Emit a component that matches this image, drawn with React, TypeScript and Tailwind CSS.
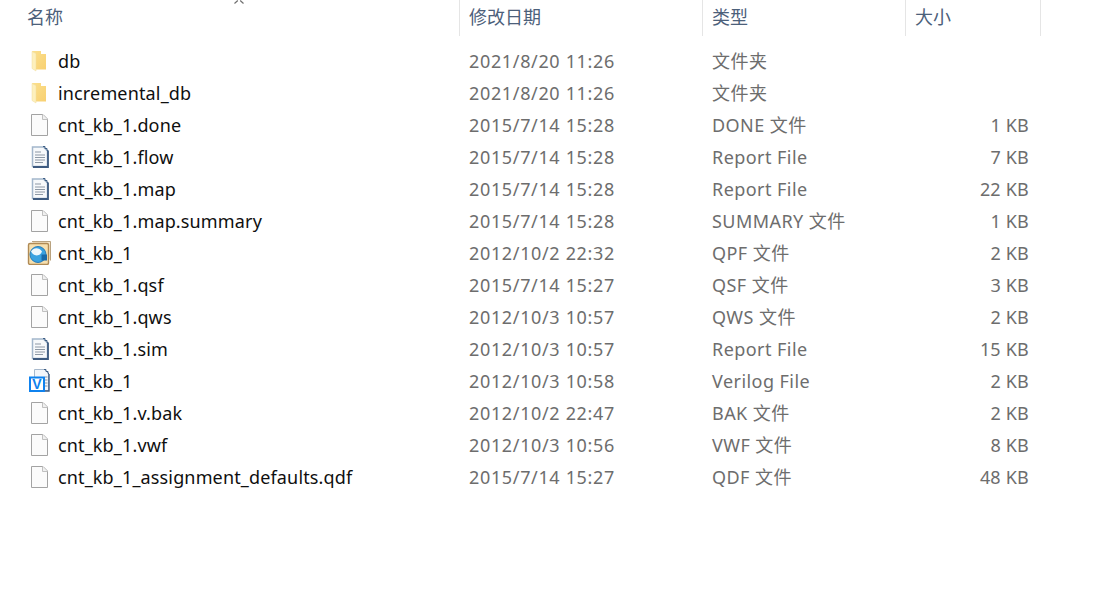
const files = [
  { name: "db", date: "2021/8/20 11:26", type: "文件夹", size: "", icon: "folder" },
  { name: "incremental_db", date: "2021/8/20 11:26", type: "文件夹", size: "", icon: "folder" },
  { name: "cnt_kb_1.done", date: "2015/7/14 15:28", type: "DONE 文件", size: "1 KB", icon: "blank" },
  { name: "cnt_kb_1.flow", date: "2015/7/14 15:28", type: "Report File", size: "7 KB", icon: "report" },
  { name: "cnt_kb_1.map", date: "2015/7/14 15:28", type: "Report File", size: "22 KB", icon: "report" },
  { name: "cnt_kb_1.map.summary", date: "2015/7/14 15:28", type: "SUMMARY 文件", size: "1 KB", icon: "blank" },
  { name: "cnt_kb_1", date: "2012/10/2 22:32", type: "QPF 文件", size: "2 KB", icon: "qpf" },
  { name: "cnt_kb_1.qsf", date: "2015/7/14 15:27", type: "QSF 文件", size: "3 KB", icon: "blank" },
  { name: "cnt_kb_1.qws", date: "2012/10/3 10:57", type: "QWS 文件", size: "2 KB", icon: "blank" },
  { name: "cnt_kb_1.sim", date: "2012/10/3 10:57", type: "Report File", size: "15 KB", icon: "report" },
  { name: "cnt_kb_1", date: "2012/10/3 10:58", type: "Verilog File", size: "2 KB", icon: "verilog" },
  { name: "cnt_kb_1.v.bak", date: "2012/10/2 22:47", type: "BAK 文件", size: "2 KB", icon: "blank" },
  { name: "cnt_kb_1.vwf", date: "2012/10/3 10:56", type: "VWF 文件", size: "8 KB", icon: "blank" },
  { name: "cnt_kb_1_assignment_defaults.qdf", date: "2015/7/14 15:27", type: "QDF 文件", size: "48 KB", icon: "blank" },
];

function FileIcon({ kind }: { kind: string }) {
  if (kind === "folder") {
    return (
      <svg width="24" height="24" viewBox="0 0 24 24">
        <defs>
          <linearGradient id="folderBody" x1="0" y1="0" x2="1" y2="1">
            <stop offset="0" stopColor="#fbe08e" />
            <stop offset="1" stopColor="#f8d071" />
          </linearGradient>
        </defs>
        <path d="M5 2h9v3h5v15.500H9z" fill="url(#folderBody)" />
        <path d="M5 2.500l4 2v17.500l-4-2.500z" fill="#fdf0bd" stroke="#f0dc9e" strokeWidth="0.5" />
      </svg>
    );
  }
  if (kind === "blank") {
    return (
      <svg width="24" height="24" viewBox="0 0 24 24">
        <path d="M4.500 1.500h11.500l4.500 4.500v16.500h-16z" fill="#fbfbfb" stroke="#a3a3a3" />
        <path d="M15.500 1.500v5h5" fill="#f0f0f0" stroke="#c0c0c0" />
      </svg>
    );
  }
  if (kind === "report") {
    return (
      <svg width="24" height="24" viewBox="0 0 24 24">
        <path d="M5.500 2h11l4 4v15.500h-15z" fill="#f7f9fb" stroke="#a3b6cb" strokeWidth="1.500" />
        <path d="M16 1.500h2v2h2v2h1.500" fill="none" stroke="#3f5f85" />
        <path d="M8 7h6M8 10h10M8 12.500h10M8 15h10M8 17.500h8" stroke="#8d98a5" strokeWidth="1.200" />
        <path d="M21 6v16H6" fill="none" stroke="#3d5a80" strokeWidth="1.800" />
      </svg>
    );
  }
  if (kind === "qpf") {
    return (
      <svg width="24" height="24" viewBox="0 0 24 24">
        <path d="M5 0.500h18.500v19" fill="#f6e6c8" stroke="#b9a27f" />
        <rect x="1.500" y="2.500" width="20" height="21" rx="1.500" fill="#f6dfae" stroke="#b08a55" strokeWidth="1.400" />
        <circle cx="11" cy="13.500" r="8" fill="#3aa2e0" stroke="#2a7cb8" />
        <path d="M4 10.500c3-4.500 8-4 11 0-2 5-8 5.500-11 0z" fill="#eef7fc" />
        <rect x="14.500" y="13.500" width="5.500" height="6" fill="#1a6aa8" />
      </svg>
    );
  }
  return (
    <svg width="24" height="24" viewBox="0 0 24 24">
      <path d="M7.500 0.500h10l4 4v17h-14z" fill="#f3f6fa" stroke="#a9bacd" />
      <path d="M17 0.500h2v2h2v2h1" fill="none" stroke="#3f5f85" />
      <path d="M18 8h2.500M18 11h2.500M18 14h2.500M18 17h2.500" stroke="#8d98a5" />
      <path d="M22 5v17H15" fill="none" stroke="#3d5a80" strokeWidth="1.400" />
      <rect x="3" y="8.500" width="14" height="13.500" fill="#ffffff" stroke="#0f82ee" strokeWidth="2" />
      <text x="10" y="20" textAnchor="middle" fontSize="14" fontWeight="700" fontFamily="'Liberation Sans', sans-serif" fill="#0f82ee">V</text>
    </svg>
  );
}

export default function App() {
  return (
    <div className="relative h-[610px] w-[1101px] overflow-hidden bg-white font-['Noto_Sans','Noto_Sans_CJK_SC',sans-serif] text-[18px] text-[#0f0f0f]">
      {/* sort arrow */}
      <svg className="absolute left-[233px] top-0" width="12" height="5" viewBox="0 0 12 5">
        <path d="M1.500 3.500L4.800 0.500M10.500 3.500L7.200 0.500" fill="none" stroke="#6f6f6f" strokeWidth="1.200" />
      </svg>

      {/* Header */}
      <div className="flex h-[36px] w-[1041px] leading-[34px] text-[#4c607a]">
        <div className="w-[460px] border-r border-[#e5e5e5] pl-[27px]">名称</div>
        <div className="w-[243px] border-r border-[#e5e5e5] pl-[9px]">修改日期</div>
        <div className="w-[203px] border-r border-[#e5e5e5] pl-[9px]">类型</div>
        <div className="w-[135px] border-r border-[#e5e5e5] pl-[9px]">大小</div>
      </div>

      {/* Rows */}
      <div className="mt-[9px] flex w-[1041px] flex-col">
        {files.map((f) => (
          <div key={f.date + f.name} className="flex h-[32px] items-center">
            <div className="flex w-[460px] items-center">
              <div className="ml-[27px] mr-[7px] h-[24px] w-[24px]">
                <FileIcon kind={f.icon} />
              </div>
              <span className="tracking-[0.15px]">{f.name}</span>
            </div>
            <div className="w-[243px] pl-[9px] tracking-[0.65px] text-[#6d6d6d]">{f.date}</div>
            <div className="w-[203px] pl-[9px] tracking-[0.45px] text-[#6d6d6d]">{f.type}</div>
            <div className="w-[123px] text-right tracking-[0.2px] text-[#6d6d6d]">{f.size}</div>
          </div>
        ))}
      </div>
    </div>
  );
}
